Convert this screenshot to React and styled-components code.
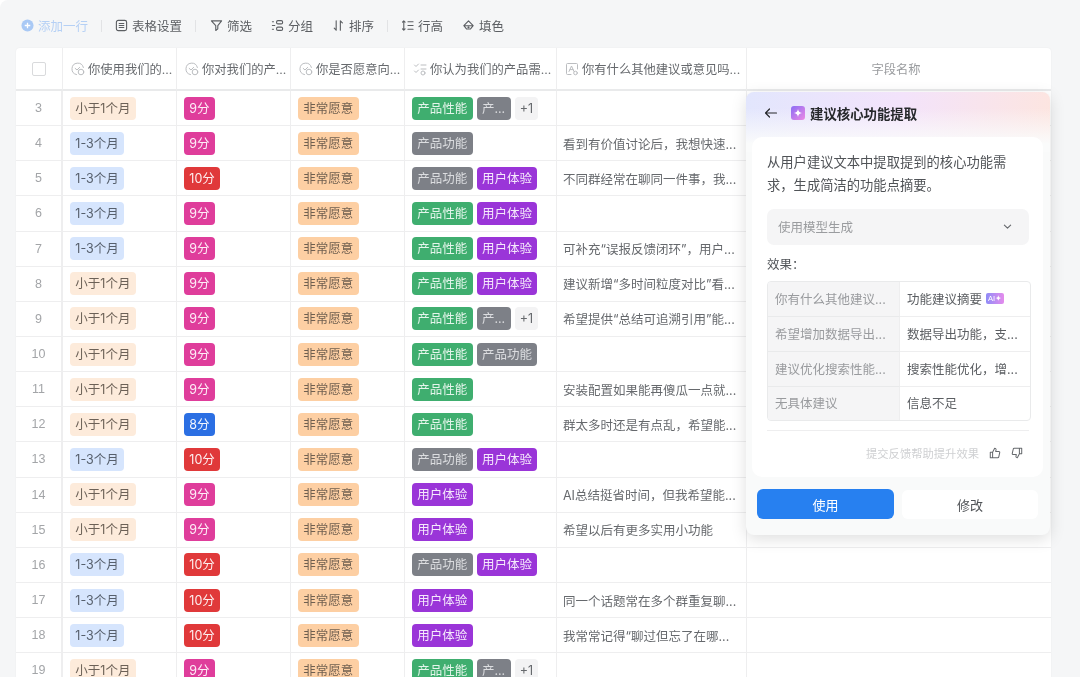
import React from 'react';
import styled, { createGlobalStyle } from 'styled-components';

const GlobalStyle = createGlobalStyle`
  html, body {
    margin: 0;
    padding: 0;
    height: 677px;
    overflow: hidden;
    background: #ffffff;
  }
  * { box-sizing: border-box; }
`;

const Page = styled.div`
  width: 1080px;
  height: 677px;
  overflow: hidden;
  padding: 5px 29px 0 16px;
  background: #f5f6f7;
  border-radius: 8px 0 0 0;
  font-family: Inter, "Noto Sans CJK SC", "Noto Sans", sans-serif;
  filter: blur(0.5px);
`;

const Toolbar = styled.div`
  height: 43px;
  display: flex;
  align-items: center;
  padding: 0 0 2px 5px;
`;

const ToolItem = styled.div`
  display: flex;
  align-items: center;
  gap: 4px;
  font-size: 12.5px;
  color: ${p => (p.$muted ? '#b5d0f5' : '#5c5f63')};
  margin-right: ${p => p.$gap || 19}px;
  white-space: nowrap;
`;

const ToolDivider = styled.div`
  width: 1px;
  height: 12px;
  background: #e2e3e5;
  margin-right: ${p => p.$gap || 13}px;
`;

const TableWrap = styled.div`
  position: relative;
  width: 1035px;
  background: #fff;
  border-radius: 4px 4px 0 0;
  box-shadow: 0 0 2px rgba(0, 0, 0, 0.06);
`;

const Grid = styled.div`
  display: grid;
  grid-template-columns: 47px 114px 114px 114px 152px 190px 304px;
`;

const HeadCell = styled.div`
  height: 43px;
  display: flex;
  align-items: center;
  justify-content: ${p => (p.$center ? 'center' : 'flex-start')};
  gap: 3px;
  padding: ${p => (p.$center ? `0 ${p.$shift || 0}px 0 0` : '0 0 0 8px')};
  border-right: ${p => (p.$last ? '0' : '1px solid #eeeeef')};
  border-bottom: 2px solid #e9eaeb;
  font-size: 12.3px;
  color: ${p => p.$color || '#66696d'};
  white-space: nowrap;
  overflow: hidden;
`;

const Cell = styled.div`
  height: 35.15px;
  display: flex;
  align-items: center;
  gap: 4px;
  padding: 0 0 0 ${p => p.$pad ?? 7}px;
  border-right: ${p => (p.$last ? '0' : '1px solid #eeeeef')};
  border-bottom: 1px solid #eeeeef;
  overflow: hidden;
  white-space: nowrap;
  font-size: 12.5px;
  color: #66696d;
`;

const RowNumber = styled(Cell)`
  justify-content: center;
  padding: 0;
  color: #a3a5a8;
  font-family: "Liberation Sans", "Noto Sans", sans-serif;
  font-size: 12.5px;
  border-right: 2px solid #eeeeef;
`;

const Check = styled.div`
  width: 14px;
  height: 14px;
  border: 1px solid #d9dadc;
  border-radius: 2px;
  background: #fff;
`;

const Tag = styled.span`
  display: inline-flex;
  align-items: center;
  height: 23px;
  padding: 1.5px 5.3px 0;
  border-radius: 4px;
  font-size: 12.5px;
  line-height: 1;
  white-space: nowrap;
  background: ${p => p.$bg};
  color: ${p => p.$fg};
`;

const Panel = styled.div`
  position: absolute;
  left: 730px;
  top: 44px;
  width: 304px;
  height: 443px;
  display: flex;
  flex-direction: column;
  padding: 0 7px 0 6px;
  border-radius: 8px;
  background: linear-gradient(180deg, rgba(250, 251, 251, 0) 0, rgba(250, 251, 251, 0) 16px, #fafbfb 52px) top / 100% 60px no-repeat,
    linear-gradient(100deg, #e2e6fd 0%, #f3e3fb 50%, #fde5df 100%) top / 100% 60px no-repeat,
    #f9fafa;
  box-shadow: 0 4px 16px rgba(0, 0, 0, 0.13);
`;

const PanelHead = styled.div`
  height: 45px;
  flex: none;
  display: flex;
  align-items: center;
  padding: 0 0 3px 12px;
  font-size: 13.4px;
  font-weight: 700;
  color: #26282b;
`;

const SparkBox = styled.div`
  width: 14px;
  height: 14px;
  margin: 0 5px 0 13px;
  border-radius: 3px;
  display: flex;
  align-items: center;
  justify-content: center;
  background: linear-gradient(135deg, #8a6cf5, #ee8ae4);
`;

const PanelBody = styled.div`
  background: #fff;
  border-radius: 10px;
  padding: 14px 12px 0 15px;
  height: 340px;
  flex: none;
`;

const Intro = styled.div`
  width: 245px;
  font-size: 13.3px;
  line-height: 23px;
  color: #505357;
`;

const Select = styled.div`
  margin-top: 12px;
  width: 262px;
  height: 36px;
  border-radius: 7px;
  background: #f5f5f6;
  display: flex;
  align-items: center;
  justify-content: space-between;
  padding: 0 16px 2px 11px;
  font-size: 12.5px;
  color: #9a9c9f;
`;

const ResultLabel = styled.div`
  margin-top: 10px;
  font-size: 12.5px;
  line-height: 20px;
  color: #505357;
`;

const MiniTable = styled.div`
  margin-top: 6px;
  width: 264px;
  display: grid;
  grid-template-columns: 132px 130px;
  border: 1px solid #e9eaeb;
  border-radius: 4px;
  overflow: hidden;
`;

const MiniKey = styled.div`
  height: ${p => (p.$last ? 33 : 35)}px;
  display: flex;
  align-items: center;
  padding: 0 0 2px 7px;
  font-size: 12.5px;
  color: #999b9e;
  background: #f5f5f6;
  border-right: 1px solid #eeeeef;
  border-bottom: ${p => (p.$last ? '0' : '1px solid #e9eaeb')};
  white-space: nowrap;
`;

const MiniValue = styled.div`
  height: ${p => (p.$last ? 33 : 35)}px;
  display: flex;
  align-items: center;
  gap: 4px;
  padding: 0 0 2px 7px;
  font-size: 12.5px;
  color: #5b5e62;
  border-bottom: ${p => (p.$last ? '0' : '1px solid #eeeeef')};
  white-space: nowrap;
`;

const AiBadge = styled.span`
  display: inline-flex;
  align-items: center;
  justify-content: center;
  width: 18px;
  height: 11px;
  border-radius: 2px;
  font-family: "Liberation Sans", sans-serif;
  font-size: 7.5px;
  color: #fff;
  background: linear-gradient(90deg, #8f8cf7, #e58bec);
`;

const FeedbackRow = styled.div`
  margin-top: 9px;
  width: 262px;
  height: 44px;
  border-top: 1px solid #eeeeef;
  display: flex;
  align-items: center;
  gap: 10px;
  font-size: 11.3px;
  color: #cfd0d2;
  padding: 0 6px 0 99px;
`;

const Actions = styled.div`
  margin-top: 12px;
  padding: 0 5px;
  display: flex;
  align-items: center;
  gap: 8px;
`;

const PrimaryButton = styled.button`
  width: 137px;
  height: 30px;
  border: 0;
  border-radius: 6px;
  background: #2780f0;
  color: #fff;
  font-family: inherit;
  font-size: 13px;
`;

const GhostButton = styled.button`
  width: 136px;
  height: 29px;
  border: 0;
  border-radius: 6px;
  background: #fff;
  color: #505357;
  font-family: inherit;
  font-size: 13px;
`;

const Stroke = ({ size = 13, color = '#5c5f63', sw = 1.2, children }) => (
  <svg width={size} height={size} viewBox="0 0 14 14" fill="none" stroke={color} strokeWidth={sw} strokeLinecap="round" strokeLinejoin="round">
    {children}
  </svg>
);

const AddIcon = () => (
  <svg width="13" height="13" viewBox="0 0 14 14">
    <circle cx="7" cy="7" r="6.5" fill="#a9c9f5" />
    <path d="M7 4v6M4 7h6" stroke="#fff" strokeWidth="1.4" />
  </svg>
);
const SettingsIcon = () => (
  <Stroke>
    <rect x="1.5" y="1.5" width="11" height="11" rx="2" />
    <path d="M4.5 4.8h5M4.5 7h5M4.5 9.2h5" />
  </Stroke>
);
const FilterIcon = () => (
  <Stroke>
    <path d="M1.5 2h11L8.4 7.2v3.4L6.2 12.4V7.2z" />
  </Stroke>
);
const GroupIcon = () => (
  <Stroke>
    <path d="M1.5 3h1.2M1.5 7h2.6M1.5 11h1.2" />
    <rect x="6" y="1.8" width="6.5" height="3.4" rx="1.5" />
    <rect x="6" y="8.8" width="6.5" height="3.4" rx="1.5" />
  </Stroke>
);
const SortIcon = () => (
  <Stroke>
    <path d="M4.5 2v10M2.4 9.8 4.5 12M9 12V2M11.2 4.2 9 2" />
  </Stroke>
);
const HeightIcon = () => (
  <Stroke>
    <path d="M3 2v10M1.6 3.4 3 2l1.4 1.4M1.6 10.6 3 12l1.4-1.4M7.5 3h5.5M7.5 7h5.5M7.5 11h5.5" />
  </Stroke>
);
const FillIcon = () => (
  <Stroke>
    <path d="M7 2 2 7.2l3 3.6h4l3-3.6zM2.6 7.2h8.8" />
    <circle cx="7" cy="9" r="0.6" />
  </Stroke>
);
const SelectFieldIcon = () => (
  <Stroke size={14} color="#bbbdc0" sw={1}>
    <path d="M12.4 5.5A5.8 5.8 0 1 0 5.5 12.6" />
    <circle cx="10" cy="10" r="2.8" />
    <path d="M4.2 6.4 6 8l2.6-2.6" />
  </Stroke>
);
const MultiFieldIcon = () => (
  <Stroke size={14} color="#bbbdc0" sw={1}>
    <path d="M1.5 3 3 4.5 5.5 2M1.5 9 3 10.5 5.5 8M8 3h5M8 7h5" />
    <circle cx="10" cy="11" r="2" />
  </Stroke>
);
const TextFieldIcon = () => (
  <Stroke size={14} color="#bbbdc0" sw={1}>
    <path d="M6 12.5H2.5a1 1 0 0 1-1-1v-9a1 1 0 0 1 1-1h9a1 1 0 0 1 1 1V7" />
    <path d="M4 9.5 6.5 4 9 9.5M5 7.6h3" />
    <circle cx="10.5" cy="11" r="1.8" />
  </Stroke>
);
const BackIcon = () => (
  <Stroke size={14} color="#26282b" sw={1.2}>
    <path d="M12.5 7h-11M5.5 3 1.5 7l4 4" />
  </Stroke>
);
const Chevron = () => (
  <Stroke size={11} color="#66696d" sw={1.5}>
    <path d="M3 5.2 7 9l4-3.8" />
  </Stroke>
);
const ThumbUp = () => (
  <Stroke size={12} color="#66696d" sw={1.2}>
    <path d="M4.2 6v6.5H1.5V6zM4.2 6 6.6 1.5c1.2 0 1.8.8 1.6 1.9L7.8 5.2h3.6c.8 0 1.3.7 1.1 1.4l-1.1 4.9c-.1.6-.6 1-1.2 1H4.2" />
  </Stroke>
);
const ThumbDown = () => (
  <Stroke size={12} color="#66696d" sw={1.2}>
    <path d="M9.8 8V1.5h2.7V8zM9.8 8l-2.4 4.5c-1.2 0-1.8-.8-1.6-1.9l.4-1.8H2.6c-.8 0-1.3-.7-1.1-1.4l1.1-4.9c.1-.6.6-1 1.2-1h6" />
  </Stroke>
);

const DURATION = {
  s: { label: '小于1个月', bg: '#fdebdb', fg: '#6c6157' },
  m: { label: '1-3个月', bg: '#d6e5fd', fg: '#565f6c' },
};
const SCORE = {
  8: { label: '8分', bg: '#2b6fe3', fg: '#f2f6fe' },
  9: { label: '9分', bg: '#df3d9b', fg: '#fdeef7' },
  10: { label: '10分', bg: '#e0393a', fg: '#fdeeee' },
};
const NEED = {
  perf: { label: '产品性能', bg: '#3fae6f', fg: '#e4f5eb' },
  func: { label: '产品功能', bg: '#7d8087', fg: '#dcdde0' },
  ux: { label: '用户体验', bg: '#9a35d8', fg: '#f5e9fc' },
  short: { label: '产...', bg: '#7d8087', fg: '#dcdde0' },
  more: { label: '+1', bg: '#f3f3f4', fg: '#66696d' },
};

const ROWS = [
  [3, 's', 9, ['perf', 'short', 'more'], ''],
  [4, 'm', 9, ['func'], '看到有价值讨论后，我想快速...'],
  [5, 'm', 10, ['func', 'ux'], '不同群经常在聊同一件事，我...'],
  [6, 'm', 9, ['perf', 'ux'], ''],
  [7, 'm', 9, ['perf', 'ux'], '可补充“误报反馈闭环”，用户...'],
  [8, 's', 9, ['perf', 'ux'], '建议新增“多时间粒度对比”看...'],
  [9, 's', 9, ['perf', 'short', 'more'], '希望提供“总结可追溯引用”能...'],
  [10, 's', 9, ['perf', 'func'], ''],
  [11, 's', 9, ['perf'], '安装配置如果能再傻瓜一点就...'],
  [12, 's', 8, ['perf'], '群太多时还是有点乱，希望能...'],
  [13, 'm', 10, ['func', 'ux'], ''],
  [14, 's', 9, ['ux'], 'AI总结挺省时间，但我希望能...'],
  [15, 's', 9, ['ux'], '希望以后有更多实用小功能'],
  [16, 'm', 10, ['func', 'ux'], ''],
  [17, 'm', 10, ['ux'], '同一个话题常在多个群重复聊...'],
  [18, 'm', 10, ['ux'], '我常常记得“聊过但忘了在哪...'],
  [19, 's', 9, ['perf', 'short', 'more'], ''],
];

const EFFECTS = [
  ['你有什么其他建议...', '功能建议摘要'],
  ['希望增加数据导出...', '数据导出功能，支...'],
  ['建议优化搜索性能...', '搜索性能优化，增...'],
  ['无具体建议', '信息不足'],
];

function App() {
  return (
    <Page>
      <GlobalStyle />
      <Toolbar>
        <ToolItem $muted $gap={13}><AddIcon />添加一行</ToolItem>
        <ToolDivider />
        <ToolItem $gap={13}><SettingsIcon />表格设置</ToolItem>
        <ToolDivider $gap={14} />
        <ToolItem><FilterIcon />筛选</ToolItem>
        <ToolItem><GroupIcon />分组</ToolItem>
        <ToolItem $gap={13}><SortIcon />排序</ToolItem>
        <ToolDivider $gap={13} />
        <ToolItem><HeightIcon />行高</ToolItem>
        <ToolItem><FillIcon />填色</ToolItem>
      </Toolbar>
      <TableWrap>
        <Grid>
          <HeadCell $center><Check /></HeadCell>
          <HeadCell><SelectFieldIcon />你使用我们的...</HeadCell>
          <HeadCell><SelectFieldIcon />你对我们的产...</HeadCell>
          <HeadCell><SelectFieldIcon />你是否愿意向...</HeadCell>
          <HeadCell><MultiFieldIcon />你认为我们的产品需...</HeadCell>
          <HeadCell><TextFieldIcon />你有什么其他建议或意见吗...</HeadCell>
          <HeadCell $center $last $shift={6} $color="#9a9c9f">字段名称</HeadCell>
          {ROWS.map(([num, duration, score, needs, comment]) => (
            <React.Fragment key={num}>
              <RowNumber>{num}</RowNumber>
              <Cell>
                <Tag $bg={DURATION[duration].bg} $fg={DURATION[duration].fg}>{DURATION[duration].label}</Tag>
              </Cell>
              <Cell>
                <Tag $bg={SCORE[score].bg} $fg={SCORE[score].fg}>{SCORE[score].label}</Tag>
              </Cell>
              <Cell>
                <Tag $bg="#fdcfa3" $fg="#6f5f50">非常愿意</Tag>
              </Cell>
              <Cell>
                {needs.map((need, i) => (
                  <Tag key={i} $bg={NEED[need].bg} $fg={NEED[need].fg}>{NEED[need].label}</Tag>
                ))}
              </Cell>
              <Cell $pad={6}>{comment}</Cell>
              <Cell $last />
            </React.Fragment>
          ))}
        </Grid>
        <Panel>
          <PanelHead>
            <BackIcon />
            <SparkBox>
              <svg width="8" height="8" viewBox="0 0 8 8">
                <path d="M4 0c.3 2.2 1.5 3.6 4 4-2.5.4-3.7 1.8-4 4-.3-2.2-1.5-3.6-4-4 2.5-.4 3.7-1.8 4-4z" fill="#fff" />
              </svg>
            </SparkBox>
            建议核心功能提取
          </PanelHead>
          <PanelBody>
            <Intro>从用户建议文本中提取提到的核心功能需求，生成简洁的功能点摘要。</Intro>
            <Select>使用模型生成<Chevron /></Select>
            <ResultLabel>效果：</ResultLabel>
            <MiniTable>
              {EFFECTS.map(([key, value], i) => (
                <React.Fragment key={key}>
                  <MiniKey $last={i === 3}>{key}</MiniKey>
                  <MiniValue $last={i === 3}>
                    {value}
                    {i === 0 && <AiBadge>AI✦</AiBadge>}
                  </MiniValue>
                </React.Fragment>
              ))}
            </MiniTable>
            <FeedbackRow>提交反馈帮助提升效果<ThumbUp /><ThumbDown /></FeedbackRow>
          </PanelBody>
          <Actions>
            <PrimaryButton>使用</PrimaryButton>
            <GhostButton>修改</GhostButton>
          </Actions>
        </Panel>
      </TableWrap>
    </Page>
  );
}

export default App;
